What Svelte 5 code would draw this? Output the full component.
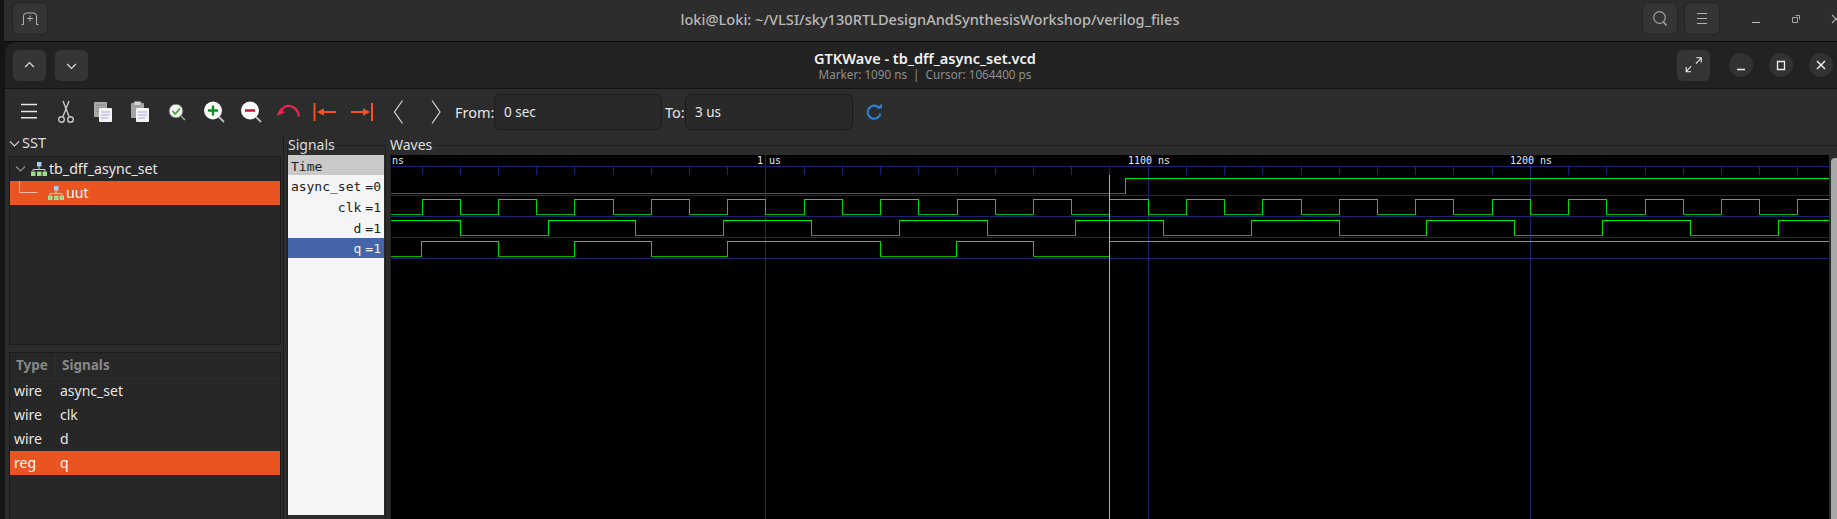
<script>
  const width = 1438;
  const height = 364;

  // wave canvas starts at page x 391, y 155, edges below are page x
  const ox = 391;
  const oy = 155;
  const clk = [];
  for (let k = 0; 421.5 + 38.22 * k < 1829; k++) clk.push(Math.round(421.5 + 38.22 * k));

  const rows = [
    { high: 178, low: 193, line: 195, start: 0, lowColor: '#009400', edges: [1125] },
    { high: 199, low: 214, line: 216, start: 0, lowColor: '#00b800', edges: clk },
    { high: 220, low: 235, line: 237, start: 1, lowColor: '#00b800', edges: [460, 548, 635, 723, 811, 899, 987, 1075, 1163, 1251, 1339, 1426, 1514, 1602, 1690, 1778] },
    { high: 241, low: 256, line: 258, start: 0, lowColor: '#00b800', edges: [421, 498, 574, 651, 727, 880, 956, 1033, 1109] }
  ];

  function segments(row) {
    const out = [];
    let x = ox;
    let level = row.start;
    for (const e of row.edges) {
      out.push({ x1: x, x2: e, y: level ? row.high : row.low, level });
      out.push({ x: e, y1: row.high, y2: row.low });
      x = e;
      level = 1 - level;
    }
    out.push({ x1: x, x2: ox + width, y: level ? row.high : row.low, level });
    return out;
  }

  const majors = [765, 1148, 1530];
  const labels = [
    { x: 392, text: 'ns' },
    { x: 757, text: '1 us' },
    { x: 1128, text: '1100 ns' },
    { x: 1510, text: '1200 ns' }
  ];

  const signals = [
    { name: 'async_set', value: '0' },
    { name: 'clk', value: '1' },
    { name: 'd', value: '1' },
    { name: 'q', value: '1', selected: true }
  ];

  const types = [
    { type: 'wire', name: 'async_set' },
    { type: 'wire', name: 'clk' },
    { type: 'wire', name: 'd' },
    { type: 'reg', name: 'q', selected: true }
  ];
</script>

<div class="screen">
  <header class="term-bar">
    <button class="hb">
      <svg width="34" height="33" viewBox="0 0 34 33" fill="none" stroke="#b4b4b4"><path d="M10.5 22.5V14q0-3 3-3h7q3 0 3 3v8.5M8.5 22.5h2M23.5 22.5h2M17 13.5v6M14 16.5h6" /></svg>
    </button>
    <div class="term-title">loki@Loki: ~/VLSI/sky130RTLDesignAndSynthesisWorkshop/verilog_files</div>
    <div class="term-right">
      <button class="hb">
        <svg width="34" height="33" viewBox="0 0 34 33" fill="none" stroke="#a0a0a0" stroke-width="1.2"><circle cx="16.5" cy="15.5" r="5.8" /><path d="M20.5 20l3 3.5" stroke-width="1.7" /></svg>
      </button>
      <button class="hb">
        <svg width="34" height="33" viewBox="0 0 34 33" stroke="#b4b4b4"><path d="M12 11.5h10M12 16.5h10M12 21.5h10" /></svg>
      </button>
      <div class="term-ctl">
        <span><svg width="10" height="10" stroke="#bdbdbd"><path d="M1 8.5h8" /></svg></span>
        <span><svg width="10" height="10" fill="none" stroke="#a8a8a8"><path d="M1.5 3.5h5v5h-5zM4.5 1.5h4v4" /></svg></span>
        <span><svg width="10" height="10" fill="none" stroke="#b0b0b0" stroke-width="1.2"><path d="M1 1l8 8M9 1l-8 8" /></svg></span>
      </div>
    </div>
  </header>

  <div class="window">
    <div class="win-head">
      <div class="head-left">
        <button class="hb sm">
          <svg width="34" height="32" viewBox="0 0 34 32" fill="none" stroke="#d8d8d8" stroke-width="1.3"><path d="M12.5 18l4.5-4.5 4.5 4.5" /></svg>
        </button>
        <button class="hb sm">
          <svg width="34" height="32" viewBox="0 0 34 32" fill="none" stroke="#d8d8d8" stroke-width="1.3"><path d="M12.5 15l4.5 4.5 4.5-4.5" /></svg>
        </button>
      </div>
      <div class="head-title">
        <div class="t1">GTKWave - tb_dff_async_set.vcd</div>
        <div class="t2">Marker: 1090 ns  |  Cursor: 1064400 ps</div>
      </div>
      <div class="head-right">
        <button class="hb sm">
          <svg width="34" height="32" viewBox="0 0 34 32" fill="none" stroke="#eee" stroke-width="1.1"><path d="M19.5 14.5l5-5M20 8.5h5v5M9.5 22.5l5-5M9.5 18v5h5" /></svg>
        </button>
        <div class="circles">
          <span><svg width="24" height="24" stroke="#eee" stroke-width="1.3"><path d="M8 16.5h8" /></svg></span>
          <span><svg width="24" height="24" fill="none" stroke="#eee" stroke-width="1.3"><path d="M8.5 8.5h7v8h-7z" /></svg></span>
          <span><svg width="24" height="24" fill="none" stroke="#eee" stroke-width="1.5"><path d="M8 8l8 8M16 8l-8 8" /></svg></span>
        </div>
      </div>
    </div>

    <div class="toolbar">
      <div class="tool"><svg width="24" height="24" stroke="#e6e6e6" stroke-width="1.5"><path d="M4 4.5h16M4 11.5h16M4 17.8h16" /></svg></div>
      <div class="tool">
        <svg width="24" height="24" fill="none" stroke="#c8c8c8" stroke-width="1.4"><path d="M9 1l6 15.5M15 1l-6 15.5" /><circle cx="7.5" cy="19.5" r="2.8" /><circle cx="16.5" cy="19.5" r="2.8" /></svg>
      </div>
      <div class="tool">
        <svg width="24" height="24"><rect x="3" y="2" width="13" height="15" rx="1" fill="#a9a9a9" /><path d="M5 5h9M5 8h9M5 11h7" stroke="#8a8a8a" /><rect x="8" y="8" width="13" height="14" rx="1" fill="#f4f4f4" /><path d="M10 12h9M10 15h9M10 18h7" stroke="#a9a6ea" /></svg>
      </div>
      <div class="tool">
        <svg width="24" height="24"><rect x="3" y="3" width="13" height="15" rx="1" fill="#a4a4a4" /><rect x="6" y="1.5" width="7" height="4" rx="1" fill="#d6d6d6" stroke="#777" stroke-width=".5" /><rect x="8" y="8" width="13" height="14" rx="1" fill="#f4f4f4" /><path d="M10 12h9M10 15h9M10 18h7" stroke="#a9a6ea" /></svg>
      </div>
      <div class="tool">
        <svg width="24" height="24" fill="none"><path d="M16 16l4 4" stroke="#a8a8a8" stroke-width="1.5" /><circle cx="11" cy="11" r="7" fill="#f2f2f2" stroke="#555" /><path d="M7.5 11l2.8 3 4.7-5.500" stroke="#3da62a" stroke-width="1.8" /></svg>
      </div>
      <div class="tool">
        <svg width="24" height="24" fill="none"><path d="M17 17l5 5" stroke="#bdbdbd" stroke-width="1.8" /><circle cx="11" cy="10.5" r="9" fill="#fbfbfb" /><path d="M11 5.5v10M6 10.5h10" stroke="#0f8f1e" stroke-width="2.4" /></svg>
      </div>
      <div class="tool">
        <svg width="24" height="24" fill="none"><path d="M17 17l5 5" stroke="#bdbdbd" stroke-width="1.8" /><circle cx="11" cy="10.5" r="9" fill="#fbfbfb" /><path d="M6 10.5h10" stroke="#c4122f" stroke-width="2.4" /></svg>
      </div>
      <div class="tool">
        <svg width="24" height="24" fill="none"><path d="M22.8 16.5C22.5 9.5 17 5.8 12.3 5.8 9.5 5.8 7.3 7.5 5.5 10" stroke="#e6274d" stroke-width="2.3" /><path d="M.3 16L4.6 8l4.2 4.8z" fill="#e6274d" /></svg>
      </div>
      <div class="tool">
        <svg width="24" height="24" fill="none"><path d="M1.5 3v18" stroke="#f4511e" stroke-width="2" /><path d="M8 12h15" stroke="#f4511e" stroke-width="2" /><path d="M4 12l7-3.7v7.4z" fill="#f4511e" /></svg>
      </div>
      <div class="tool">
        <svg width="24" height="24" fill="none"><path d="M22 3v18" stroke="#f4511e" stroke-width="2" /><path d="M1 12h15" stroke="#f4511e" stroke-width="2" /><path d="M20 12l-7-3.7v7.4z" fill="#f4511e" /></svg>
      </div>
      <div class="tool"><svg width="24" height="24" fill="none" stroke="#d0d0d0" stroke-width="1.3"><path d="M15.5 .5L7.5 12l8 11.5" /></svg></div>
      <div class="tool"><svg width="24" height="24" fill="none" stroke="#d0d0d0" stroke-width="1.3"><path d="M8 .5L16 12 8 23.5" /></svg></div>
      <label class="from">From:</label>
      <div class="entry">0 sec</div>
      <label class="to">To:</label>
      <div class="entry">3 us</div>
      <div class="refresh">
        <svg width="18" height="18" fill="none"><path d="M14.5 5.5a6.5 6.5 0 1 0 1 5" stroke="#2b7fd4" stroke-width="2.2" /><path d="M11 5.5h6v-5z" fill="#2b7fd4" /></svg>
      </div>
    </div>

    <div class="panes">
      <section class="sst">
        <div class="sst-head">
          <svg width="11" height="8" fill="none" stroke="#cfcfcf" stroke-width="1.1"><path d="M1 1.5l4.500 4.500 4.500-4.500" /></svg>
          <span>SST</span>
        </div>
        <div class="box tree">
          <div class="tree-row">
            <svg class="chev" width="11" height="8" fill="none" stroke="#8f8f8f" stroke-width="1.1"><path d="M1 1.5l4.500 4.500 4.500-4.500" /></svg>
            <svg class="hier" width="16" height="14"><rect x="6" y="0" width="4.5" height="4.5" fill="#a9cdf4" /><path d="M8 4.500v3M2 9V7.500h12V9" stroke="#cfd6cf" fill="none" /><rect x="0" y="9.5" width="4.5" height="4.5" fill="#9fdc8e" /><rect x="6" y="9.5" width="4.5" height="4.5" fill="#9fdc8e" /><rect x="11.5" y="9.5" width="4.5" height="4.5" fill="#9fdc8e" /></svg>
            <span>tb_dff_async_set</span>
          </div>
          <div class="tree-row selected">
            <svg class="elbow" width="28" height="24" fill="none" stroke="#f6b9a4"><path d="M9.5 0v11.5h18" /></svg>
            <svg class="hier" width="16" height="14"><rect x="6" y="0" width="4.5" height="4.5" fill="#a9cdf4" /><path d="M8 4.500v3M2 9V7.500h12V9" stroke="#f0d8cc" fill="none" /><rect x="0" y="9.5" width="4.5" height="4.5" fill="#9fdc8e" /><rect x="6" y="9.5" width="4.5" height="4.5" fill="#9fdc8e" /><rect x="11.5" y="9.5" width="4.5" height="4.5" fill="#9fdc8e" /></svg>
            <span>uut</span>
          </div>
        </div>
        <div class="box list">
          <div class="list-head"><span class="c1">Type</span><span class="c2">Signals</span></div>
          {#each types as t}
            <div class="list-row" class:selected={t.selected}><span class="c1">{t.type}</span><span class="c2">{t.name}</span></div>
          {/each}
        </div>
      </section>

      <section class="frame signals">
        <span class="legend">Signals</span>
        <div class="sig-list">
          <div class="sig-time">Time</div>
          {#each signals as s}
            <div class="sig-row" class:selected={s.selected}><span>{s.name}</span><span class="val">={s.value}</span></div>
          {/each}
        </div>
      </section>

      <section class="frame waves">
        <span class="legend">Waves</span>
        <div class="wave-wrap">
          <svg class="canvas" {width} {height} viewBox="{ox} {oy} {width} {height}" shape-rendering="crispEdges">
            {#each clk as x}
              <line x1={x + 0.5} x2={x + 0.5} y1="166" y2="175" stroke="#222272" />
            {/each}
            {#each majors as x}
              <line x1={x + 0.5} x2={x + 0.5} y1="155" y2="519" stroke="#222272" />
            {/each}
            <line x1={ox} x2={ox + width} y1="166.5" y2="166.5" stroke="#222272" />
            {#each rows as row}
              <line x1={ox} x2={ox + width} y1={row.line + 0.5} y2={row.line + 0.5} stroke="#222272" />
            {/each}
            {#each rows as row}
              {#each segments(row) as s}
                {#if s.y1}
                  <line x1={s.x + 0.5} x2={s.x + 0.5} y1={s.y1 + 0.5} y2={s.y2 + 0.5} stroke="#00dc00" />
                {:else}
                  <line x1={s.x1} x2={s.x2 + 1} y1={s.y + 0.5} y2={s.y + 0.5} stroke={s.level ? '#00ec00' : row.lowColor} />
                {/if}
              {/each}
            {/each}
            <line x1="1109.5" x2="1109.5" y1="175" y2="519" stroke="#ff8c8c" />
            {#each labels as l}
              <text x={l.x} y="164" class="tick-label">{l.text}</text>
            {/each}
          </svg>
          <div class="scroll"></div>
        </div>
      </section>
    </div>
  </div>
</div>

<style>
  :global(body) {
    margin: 0;
    background: #141414;
  }

  .screen {
    width: 1837px;
    height: 519px;
    overflow: hidden;
    padding-left: 4px;
    box-sizing: border-box;
    font-family: "Noto Sans", sans-serif;
    color: #e8e8e8;
    background: #141414;
  }

  .term-bar {
    height: 41px;
    display: flex;
    align-items: center;
    padding-left: 8px;
    background: #2d2d2d;
    border-bottom: 1px solid #0a0a0a;
  }

  .hb {
    width: 36px;
    height: 33px;
    margin: 0;
    padding: 0;
    display: flex;
    align-items: center;
    justify-content: center;
    background: #353535;
    border: 1px solid #232323;
    border-radius: 7px;
  }
  .hb.sm {
    width: 35px;
    height: 33px;
  }

  .term-title {
    flex: 1;
    text-align: center;
    padding-left: 170px;
    font-size: 14.6px;
    font-weight: 500;
    color: #b9b9b9;
    margin-top: -4px;
  }

  .term-right {
    display: flex;
    align-items: center;
    gap: 6px;
    margin-top: -4px;
  }

  .term-bar > .hb {
    margin-top: -4px;
  }

  .term-ctl {
    display: flex;
    margin-left: 10px;
    margin-right: -19px;
  }
  .term-ctl span {
    width: 40px;
    display: flex;
    justify-content: center;
  }

  .window {
    margin-left: 1px;
    height: 477px;
    background: #2c2c2c;
    border-top-left-radius: 12px;
    overflow: hidden;
  }

  .win-head {
    height: 46px;
    display: grid;
    grid-template-columns: 1fr auto 1fr;
    align-items: center;
    padding: 0 4px 0 7px;
    background: #222222;
    border-bottom: 1px solid #131313;
  }

  .head-left {
    display: flex;
    gap: 7px;
  }

  .head-title {
    text-align: center;
    padding-left: 5px;
  }
  .t1 {
    font-size: 14.5px;
    line-height: 18px;
    font-weight: 600;
    color: #f2f2f2;
  }
  .t2 {
    font-size: 11.7px;
    line-height: 14px;
    color: #8f8f8f;
    white-space: pre;
  }

  .head-right {
    display: flex;
    justify-content: flex-end;
    align-items: center;
  }
  .circles {
    display: flex;
    gap: 16px;
    margin-left: 18px;
  }
  .circles span {
    width: 24px;
    height: 24px;
    border-radius: 50%;
    background: #323232;
  }
  .circles svg {
    display: block;
  }

  .toolbar {
    height: 46px;
    display: flex;
    align-items: center;
    padding-left: 5px;
  }
  .tool {
    width: 37px;
    height: 24px;
    flex: none;
    display: flex;
    justify-content: center;
  }
  .from, .to {
    font-size: 14.5px;
    color: #e4e4e4;
  }
  .from {
    margin-left: 1px;
    width: 39px;
  }
  .to {
    width: 20px;
    margin-left: 3px;
  }
  .entry {
    width: 157px;
    height: 34px;
    line-height: 34px;
    padding-left: 9px;
    font-size: 13.5px;
    background: #292929;
    border: 1px solid #1a1a1a;
    border-radius: 7px;
  }
  .refresh {
    margin-left: 12px;
    height: 18px;
  }

  .panes {
    height: 384px;
    display: flex;
  }

  .sst {
    width: 279px;
    flex: none;
    padding-left: 4px;
    box-sizing: border-box;
    border-right: 1px solid #1a1a1a;
  }
  .sst-head {
    height: 21px;
    display: flex;
    align-items: center;
    gap: 2px;
    font-size: 14.5px;
    color: #dcdcdc;
    margin-top: -2px;
  }
  .sst-head span {
    margin-top: -3px;
  }

  .box {
    width: 272px;
    box-sizing: border-box;
    background: #272727;
    border: 1px solid #1b1b1b;
  }
  .tree {
    height: 189px;
    margin-top: 2px;
  }
  .list {
    height: 175px;
    margin-top: 7px;
  }

  .tree-row {
    height: 24px;
    display: flex;
    align-items: center;
    font-size: 14.2px;
  }
  .tree-row span {
    margin-top: -2px;
  }
  .tree-row .chev {
    margin-left: 5px;
    margin-right: 5px;
  }
  .tree-row .hier {
    margin-right: 2px;
  }
  .tree-row.selected {
    background: #e95420;
    color: #fbfbfb;
  }
  .elbow {
    margin-right: 10px;
  }

  .list-head {
    height: 25px;
    display: flex;
    align-items: center;
    font-size: 13.5px;
    font-weight: 700;
    color: #888888;
    border-bottom: 1px solid #2c2c2c;
  }
  .list-head .c1 {
    width: 46px;
    padding-left: 6px;
    box-sizing: border-box;
    border-right: 1px solid #2c2c2c;
    line-height: 23px;
  }
  .list-head .c2 {
    padding-left: 6px;
    line-height: 23px;
  }
  .list-row {
    height: 24px;
    display: flex;
    align-items: center;
    font-size: 14px;
    color: #e6e6e6;
  }
  .list-row span {
    margin-top: -2px;
  }
  .list-row .c1 {
    width: 50px;
    padding-left: 4px;
    box-sizing: border-box;
  }
  .list-row.selected {
    background: #e95420;
    color: #fbfbfb;
  }

  .frame {
    position: relative;
    height: 384px;
    box-sizing: border-box;
    border-top: 1px solid #1e1e1e;
    margin-top: 10px;
  }
  .legend {
    position: absolute;
    left: 0;
    top: -11px;
    padding-right: 2px;
    font-size: 14px;
    line-height: 20px;
    color: #dcdcdc;
    background: #2c2c2c;
  }

  .signals {
    width: 99px;
    flex: none;
    margin-left: 3px;
    border-left: 1px solid #1e1e1e;
    border-right: 1px solid #1e1e1e;
    border-bottom: 0;
  }
  .sig-list {
    width: 96px;
    margin: 9px 0 0 0;
    height: 360px;
    background: #f5f5f5;
    font-family: "DejaVu Sans Mono", monospace;
    font-size: 13px;
    color: #222222;
  }
  .sig-time {
    height: 20px;
    line-height: 23px;
    padding-left: 3px;
    background: #c9c9c9;
  }
  .sig-row {
    height: 21px;
    line-height: 23px;
    display: flex;
    justify-content: flex-end;
    padding-right: 3px;
  }
  .sig-row .val {
    margin-left: 4px;
  }
  .sig-row.selected {
    height: 20px;
    line-height: 22px;
    background: #4465a9;
    color: #f2f2f2;
  }

  .waves {
    flex: 1;
    margin-left: 4px;
    border-left: 1px solid #1e1e1e;
  }
  .waves .legend {
    left: -1px;
  }
  .wave-wrap {
    display: flex;
    margin: 9px 0 0 0;
  }
  .canvas {
    display: block;
    background: #000000;
    flex: none;
  }
  .tick-label {
    font-family: "DejaVu Sans Mono", monospace;
    font-size: 10px;
    fill: #e4ecff;
  }
  .scroll {
    width: 7px;
    height: 361px;
    margin: 3px 0 0 2px;
    background: #a8a8a8;
    border-radius: 4px 0 0 0;
  }
</style>
